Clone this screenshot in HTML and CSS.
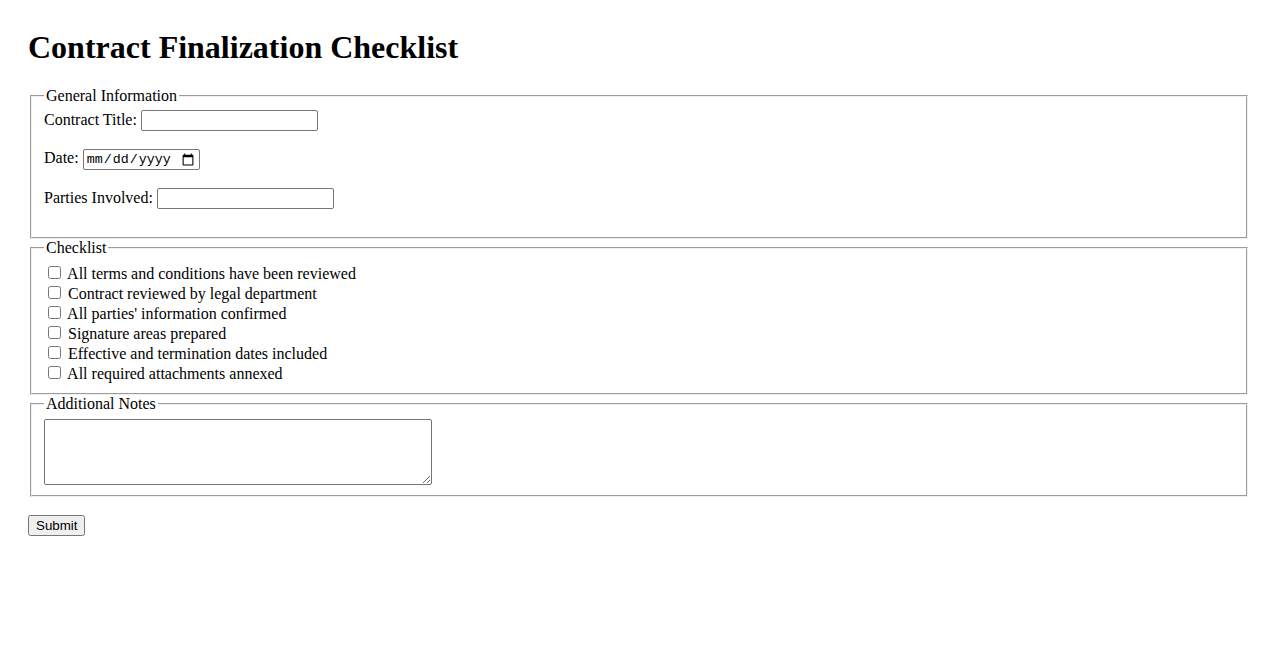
FILE: index.html
```html
<!DOCTYPE html>
<html>
<head>
<meta charset="utf-8">
<title>Contract Finalization Checklist</title>
<link rel="stylesheet" href="styles.css">
</head>
<body>
<div class="page">
<h1 class="title">Contract Finalization Checklist</h1>
<form class="form">
  <fieldset class="group">
    <legend class="legend">General Information</legend>
    <label class="field">Contract Title: <input type="text" class="text-input"></label><br><br>
    <label class="field">Date: <input type="date" class="date-input"></label><br><br>
    <label class="field">Parties Involved: <input type="text" class="text-input"></label><br><br>
  </fieldset>
  <fieldset class="group">
    <legend class="legend">Checklist</legend>
    <div class="check"><label><input type="checkbox" class="box"> All terms and conditions have been reviewed</label></div>
    <div class="check"><label><input type="checkbox" class="box"> Contract reviewed by legal department</label></div>
    <div class="check"><label><input type="checkbox" class="box"> All parties' information confirmed</label></div>
    <div class="check"><label><input type="checkbox" class="box"> Signature areas prepared</label></div>
    <div class="check"><label><input type="checkbox" class="box"> Effective and termination dates included</label></div>
    <div class="check"><label><input type="checkbox" class="box"> All required attachments annexed</label></div>
  </fieldset>
  <fieldset class="group">
    <legend class="legend">Additional Notes</legend>
    <textarea class="notes" rows="4" cols="50"></textarea>
  </fieldset>
  <div class="actions">
    <button type="submit" class="submit">Submit</button>
  </div>
</form>
</div>
</body>
</html>
```

FILE: styles.css
```css
body {
  margin: 0;
  font-family: "Liberation Serif", "Times New Roman", serif;
  font-size: 16px;
  color: #000;
  background: #fff;
}
.page {
  padding: 8px 28px;
}
.title {
  font-size: 32px;
  font-weight: bold;
  margin: 21.44px 0 20.44px;
}
.group {
  margin: 0 2px;
  border: 2px groove #f0f0f0;
  padding: 5.6px 12px 10px;
}
.legend {
  padding: 0 2px;
}
.text-input,
.date-input {
  box-sizing: border-box;
  height: 21px;
  margin: 0;
  border: 1px solid #767676;
  border-radius: 2px;
  padding: 1px 2px;
}
.text-input {
  width: 177px;
  font-family: "Liberation Sans", Arial, sans-serif;
  font-size: 13.33px;
}
.date-input {
  width: 117px;
  font-family: "Liberation Mono", "Courier New", monospace;
  font-size: 13.33px;
}
.check {
  height: 20px;
}
.box {
  width: 13px;
  height: 13px;
  margin: 3px 3px 0 4px;
  vertical-align: baseline;
}
.notes {
  display: block;
  box-sizing: border-box;
  width: 388px;
  height: 66px;
  margin: 0;
  border: 1px solid #767676;
  border-radius: 2px;
}
.actions {
  margin-top: 18px;
}
.submit {
  margin: 0;
  height: 21px;
  padding: 1px 6px;
  font-family: "Liberation Sans", Arial, sans-serif;
  font-size: 13.33px;
}
```
